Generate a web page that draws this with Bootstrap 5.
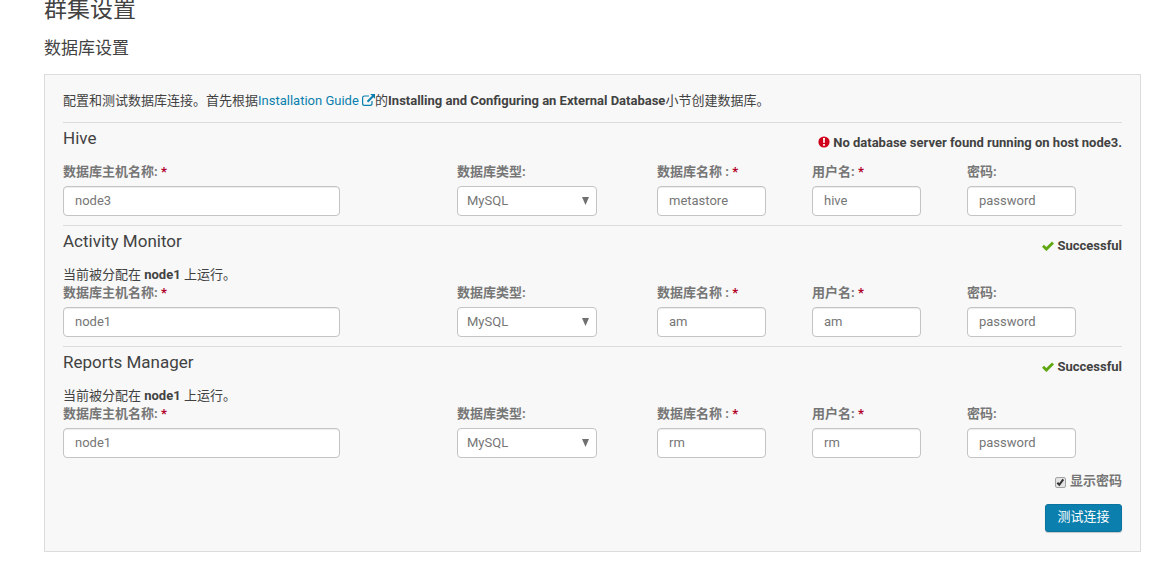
<!DOCTYPE html>
<html lang="zh-CN">
<head>
<meta charset="utf-8">
<meta name="viewport" content="width=device-width, initial-scale=1">
<title>群集设置</title>
<link href="https://cdn.jsdelivr.net/npm/bootstrap@5.3.0/dist/css/bootstrap.min.css" rel="stylesheet">
<style>
  body { font: 13px/18px Roboto, "Noto Sans CJK SC", sans-serif; color: #424242; background: #fff; }
  .page { padding: 0 19px 14px 44px; }
  .page-title { font-size: 23px; line-height: 20px; font-weight: 400; }
  .page-subtitle { font-size: 17px; line-height: 22px; font-weight: 400; margin: 17px 0 15px; }
  .panel { background: #f8f8f8; border: 1px solid #dcdcdc; padding: 17px 18px 19px; }
  .panel a { color: #0b7fad; text-decoration: none; }
  .intro { margin-bottom: 12px; }
  .service { border-top: 1px solid #dcdcdc; padding-bottom: 9px; }
  .service h3 { font-size: 17px; line-height: 22px; font-weight: 400; margin: 4px 0 14px; }
  .status { margin-top: 11px; }
  .db-fields { display: grid; grid-template-columns: 394fr 200fr 155fr 155fr 155fr; }
  .db-fields > div { padding-right: 46px; }
  .db-fields > .host { padding-right: 117px; }
  .db-fields > .kind { padding-right: 60px; }
  .db-fields label, .show-pw { color: #767676; font-weight: 700; display: block; }
  .db-fields label { margin-bottom: 5px; }
  .req { color: #b00028; }
  .form-control, .form-select { height: 30px; font-size: 13px; line-height: 18px; color: #767676; border: 1px solid #c4c4c4; border-radius: 4px; padding: 4px 11px 6px; }
  .form-control { box-shadow: inset 0 1px 1px rgba(0,0,0,.075); }
  .form-select { padding: 5px 20px 5px 9px; background: #fff url("data:image/svg+xml,%3Csvg xmlns='http://www.w3.org/2000/svg' viewBox='0 0 7 8'%3E%3Cpath fill='%23707070' d='M0 0h7L3.5 8z'/%3E%3C/svg%3E") no-repeat right 7px center / 7px 8px; }
  .show-pw { margin-left: 4px; }
  .tick { appearance: none; width: 11px; height: 11px; margin: 2px 0 0; border: 1px solid #a3a3a3; border-radius: 2px; background: #e4e4e4; }
  .tick:checked { background: url("data:image/svg+xml,%3Csvg xmlns='http://www.w3.org/2000/svg' viewBox='0 0 9 9'%3E%3Cpath fill='none' stroke='%23333' stroke-width='2' d='M1.3 4.8l2 2 4-5.5'/%3E%3C/svg%3E") center / 9px 9px, #e4e4e4; }
  .show-row { margin: 5px 0 14px; }
  .btn-test { height: 28px; padding: 3px 11px 5px; min-width: 77px; font-size: 13px; line-height: 18px; color: #fff; background: #0b7fad; border: 1px solid #0a73a0; border-radius: 3px; box-shadow: 0 1px 1px rgba(0,0,0,.2); }
  .btn-test:hover { color: #fff; background: #0a6f98; }
  .glyph { vertical-align: -1px; }
</style>
</head>
<body>
<main class="page">
  <h1 class="page-title m-0">群集设置</h1>
  <h2 class="page-subtitle">数据库设置</h2>

  <form class="panel">
    <p class="intro">配置和测试数据库连接。首先根据<a href="#">Installation Guide <svg class="glyph" width="13" height="12" viewBox="0 0 13 12" aria-hidden="true"><path fill="none" stroke="#0b7fad" stroke-width="1.2" d="M7 2H2.5Q.6 2 .6 3.8v5.6q0 1.9 1.9 1.9h5.6q1.9 0 1.9-1.9V7"/><path fill="#0b7fad" d="M8.2 0H13v4.8l-1.6-1.6L6.2 8.4 4.8 7l5.2-5.2z"/></svg></a>的<b>Installing and Configuring an External Database</b>小节创建数据库。</p>

    <section class="service">
      <div class="d-flex justify-content-between">
        <h3>Hive</h3>
        <div class="status fw-bold"><svg class="glyph" width="12" height="12" viewBox="0 0 12 12" aria-hidden="true"><circle cx="6" cy="6" r="5.6" fill="#d0021b"/><path fill="#fff" d="M5 2h2l-.3 5H5.3zM5.1 8h1.8v1.8H5.1z"/></svg> No database server found running on host node3.</div>
      </div>
      <div class="db-fields">
        <div class="host"><label for="hive-host">数据库主机名称: <span class="req">*</span></label><input class="form-control" id="hive-host" value="node3"></div>
        <div class="kind"><label for="hive-type">数据库类型:</label><select class="form-select" id="hive-type"><option>MySQL</option></select></div>
        <div><label for="hive-name">数据库名称 : <span class="req">*</span></label><input class="form-control" id="hive-name" value="metastore"></div>
        <div><label for="hive-user">用户名: <span class="req">*</span></label><input class="form-control" id="hive-user" value="hive"></div>
        <div><label for="hive-pw">密码:</label><input class="form-control" id="hive-pw" value="password"></div>
      </div>
    </section>

    <section class="service">
      <div class="d-flex justify-content-between">
        <h3>Activity Monitor</h3>
        <div class="status fw-bold"><svg class="glyph" width="12" height="10" viewBox="0 0 12 10" aria-hidden="true"><path fill="none" stroke="#5fa810" stroke-width="2.8" d="M1 4.8l3.4 3.3L11 1.5"/></svg> Successful</div>
      </div>
      <div>当前被分配在 <b>node1</b> 上运行。</div>
      <div class="db-fields">
        <div class="host"><label for="am-host">数据库主机名称: <span class="req">*</span></label><input class="form-control" id="am-host" value="node1"></div>
        <div class="kind"><label for="am-type">数据库类型:</label><select class="form-select" id="am-type"><option>MySQL</option></select></div>
        <div><label for="am-name">数据库名称 : <span class="req">*</span></label><input class="form-control" id="am-name" value="am"></div>
        <div><label for="am-user">用户名: <span class="req">*</span></label><input class="form-control" id="am-user" value="am"></div>
        <div><label for="am-pw">密码:</label><input class="form-control" id="am-pw" value="password"></div>
      </div>
    </section>

    <section class="service">
      <div class="d-flex justify-content-between">
        <h3>Reports Manager</h3>
        <div class="status fw-bold"><svg class="glyph" width="12" height="10" viewBox="0 0 12 10" aria-hidden="true"><path fill="none" stroke="#5fa810" stroke-width="2.8" d="M1 4.8l3.4 3.3L11 1.5"/></svg> Successful</div>
      </div>
      <div>当前被分配在 <b>node1</b> 上运行。</div>
      <div class="db-fields">
        <div class="host"><label for="rm-host">数据库主机名称: <span class="req">*</span></label><input class="form-control" id="rm-host" value="node1"></div>
        <div class="kind"><label for="rm-type">数据库类型:</label><select class="form-select" id="rm-type"><option>MySQL</option></select></div>
        <div><label for="rm-name">数据库名称 : <span class="req">*</span></label><input class="form-control" id="rm-name" value="rm"></div>
        <div><label for="rm-user">用户名: <span class="req">*</span></label><input class="form-control" id="rm-user" value="rm"></div>
        <div><label for="rm-pw">密码:</label><input class="form-control" id="rm-pw" value="password"></div>
      </div>
    </section>

    <div class="show-row d-flex justify-content-end align-items-center">
      <input class="tick" type="checkbox" id="show-pw" checked>
      <label class="show-pw" for="show-pw">显示密码</label>
    </div>
    <div class="d-flex justify-content-end">
      <button class="btn btn-test" type="button">测试连接</button>
    </div>
  </form>
</main>
<script src="https://cdn.jsdelivr.net/npm/bootstrap@5.3.0/dist/js/bootstrap.bundle.min.js"></script>
</body>
</html>
